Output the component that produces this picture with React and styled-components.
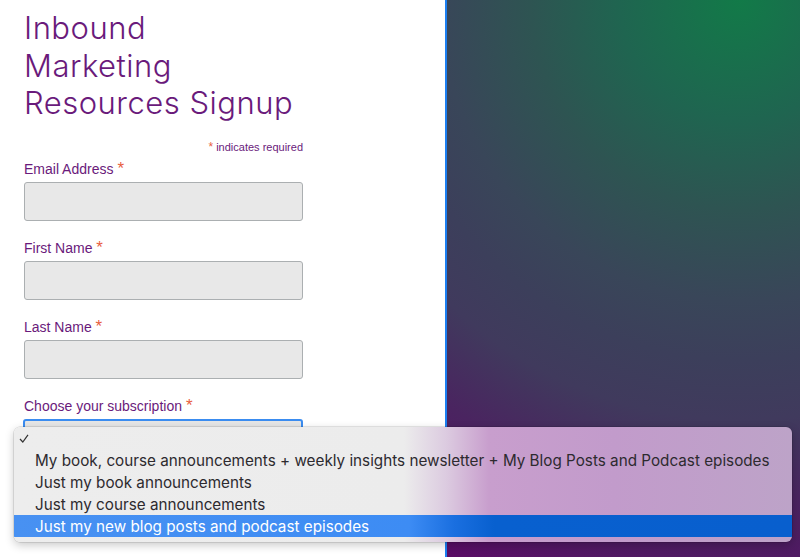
import React from 'react';
import styled, { createGlobalStyle } from 'styled-components';

const GlobalStyle = createGlobalStyle`
  html, body {
    margin: 0;
    padding: 0;
    height: 100%;
    overflow: hidden;
  }
  #root {
    height: 100%;
  }
`;

const fields = ['Email Address', 'First Name', 'Last Name'];

const options = [
  'My book, course announcements + weekly insights newsletter + My Blog Posts and Podcast episodes',
  'Just my book announcements',
  'Just my course announcements',
  'Just my new blog posts and podcast episodes',
];

const App = () => {
  return (
    <Page>
      <GlobalStyle />
      <FormPanel>
        <Title>
          Inbound
          <br />
          Marketing
          <br />
          Resources Signup
        </Title>
        <RequiredNote>
          <Star small>*</Star> indicates required
        </RequiredNote>
        {fields.map((name) => (
          <Field key={name}>
            <Label>
              {name} <Star>*</Star>
            </Label>
            <Input type="text" />
          </Field>
        ))}
        <Field>
          <Label>
            Choose your subscription <Star>*</Star>
          </Label>
          <SelectBox />
        </Field>
      </FormPanel>
      <Backdrop />

      <Menu>
        <MenuRow>
          <Check viewBox="0 0 10 9">
            <polyline points="1,5 3.8,8 9,0.8" />
          </Check>
        </MenuRow>
        {options.map((opt, i) => (
          <MenuRow key={opt} active={i === options.length - 1}>
            {opt}
          </MenuRow>
        ))}
      </Menu>
    </Page>
  );
};

export default App;

const Page = styled.div`
  position: relative;
  display: flex;
  height: 100%;
  min-height: 557px;
  background: #fff;
`;

const FormPanel = styled.div`
  width: 421px;
  flex-shrink: 0;
  padding: 9px 0 0 24px;
  background: #ffffff;
  border-right: 2px solid #1c7ff2;
  box-sizing: content-box;
`;

/* green glow sits near the top right corner and fades to purple */
const Backdrop = styled.div`
  flex: 1;
  background: radial-gradient(
    circle at 293px 0px,
    #127a48 0px,
    #1f6550 120px,
    #2e5452 210px,
    #394659 300px,
    #3c3f5b 360px,
    #403a5d 420px,
    #4a2460 500px,
    #4f1a62 560px,
    #5c0a66 640px
  );
`;

const Title = styled.h1`
  margin: 0;
  width: 279px;
  font-family: Inter, 'Open Sans', sans-serif;
  font-weight: 300;
  font-size: 31px;
  line-height: 37.5px;
  letter-spacing: 0.5px;
  color: #6a1a7b;
`;

const RequiredNote = styled.div`
  width: 279px;
  margin-top: 19px;
  margin-bottom: 7px;
  text-align: right;
  font-family: 'Liberation Sans', Arial, sans-serif;
  font-size: 11px;
  line-height: 13px;
  color: #6a1a7b;
`;

const Star = styled.span`
  color: #e8603f;
  font-size: ${(p) => (p.small ? '12px' : '17px')};
  line-height: 0;
`;

const Field = styled.div`
  width: 279px;
  margin-bottom: 19px;
`;

const Label = styled.div`
  font-family: 'Liberation Sans', Arial, sans-serif;
  font-size: 14px;
  line-height: 16px;
  color: #6a1a7b;
  margin-bottom: 5px;
`;

const Input = styled.input`
  display: block;
  width: 100%;
  height: 39px;
  box-sizing: border-box;
  background: #e8e8e8;
  border: 1px solid #abafb1;
  border-radius: 3px;
  outline: none;
`;

const SelectBox = styled.div`
  height: 40px;
  margin-left: -1px;
  box-sizing: border-box;
  background: #e6e6e6;
  border: 2px solid #3a8cf0;
  border-radius: 3px;
`;

const Menu = styled.div`
  position: absolute;
  left: 14px;
  top: 427px;
  width: 778px;
  padding-bottom: 5px;
  border-radius: 6px;
  overflow: hidden;
  background: linear-gradient(
    to right,
    #ededed 0px,
    #ececec 390px,
    #dccbe0 432px,
    #c89ecd 475px,
    #c29bcb 600px,
    #bda3c8 778px
  );
  box-shadow: 0 0 0 0.5px rgba(0, 0, 0, 0.18), 0 3px 10px rgba(0, 0, 0, 0.22);
`;

const MenuRow = styled.div`
  display: flex;
  align-items: center;
  height: 22px;
  padding-left: 21px;
  font-family: Inter, 'Liberation Sans', sans-serif;
  font-size: 15.25px;
  white-space: nowrap;
  color: ${(p) => (p.active ? '#ffffff' : '#2d2a2f')};
  background: ${(p) =>
    p.active
      ? 'linear-gradient(to right, #4891f2 0px, #3d8cf4 395px, #1a6fe0 440px, #0860cf 480px, #085fce 778px)'
      : 'transparent'};
`;

const Check = styled.svg`
  width: 10px;
  height: 9px;
  margin-left: -16px;
  fill: none;
  stroke: #333;
  stroke-width: 1.2;
`;
